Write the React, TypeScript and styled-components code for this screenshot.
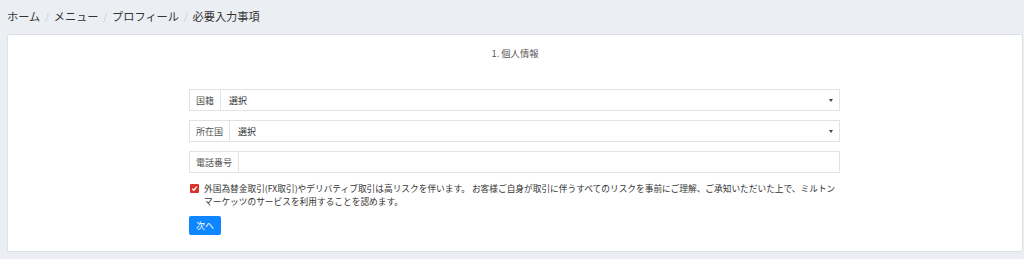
import React from 'react';
import styled, { createGlobalStyle } from 'styled-components';

const GlobalStyle = createGlobalStyle`
  html, body {
    margin: 0;
    padding: 0;
    background: #ebeef3;
    font-family: "Noto Sans CJK JP", "Liberation Sans", sans-serif;
    color: #333;
  }
`;

const Page = styled.div`
  padding: 0 1px 0 7px;
  width: 1024px;
  box-sizing: border-box;
`;

const Breadcrumb = styled.nav`
  display: flex;
  align-items: center;
  height: 34px;
  padding-bottom: 2px;
  box-sizing: border-box;
  font-size: 11.2px;
  color: #333;
`;

const Crumb = styled.span`
  color: #333;
`;

const Sep = styled.span`
  color: #c8c8c8;
  padding: 0 5px;
  font-size: 9px;
`;

const Card = styled.section`
  background: #fff;
  border: 1px solid #dde1e7;
  border-radius: 2px;
  height: 218px;
  box-sizing: border-box;
`;

const StepTitle = styled.div`
  text-align: center;
  font-size: 9.3px;
  color: #555;
  padding-top: 11px;
  height: 54px;
  box-sizing: border-box;
`;

const Form = styled.div`
  width: 651px;
  margin-left: 181px;
  display: flex;
  flex-direction: column;
  gap: 9px;
`;

const InputGroup = styled.div`
  display: flex;
  height: 22px;
  border: 1px solid #e3e3e3;
  box-sizing: border-box;
  font-size: 9px;
`;

const Addon = styled.div`
  display: flex;
  align-items: center;
  padding: 0 6px;
  color: #555;
  border-right: 1px solid #e3e3e3;
  background: #fff;
`;

const Select = styled.div`
  flex: 1;
  display: flex;
  align-items: center;
  justify-content: space-between;
  padding: 0 6px 0 8px;
  color: #333;
`;

const Caret = styled.span`
  width: 0;
  height: 0;
  border-left: 2.5px solid transparent;
  border-right: 2.5px solid transparent;
  border-top: 3px solid #444;
`;

const Field = styled.div`
  flex: 1;
`;

const Consent = styled.label`
  display: flex;
  gap: 5px;
  font-size: 8.7px;
  line-height: 13px;
  color: #333;
`;

const Check = styled.span`
  flex: none;
  width: 9px;
  height: 9px;
  margin-top: 2px;
  margin-left: 1px;
  background: #d9332b;
  border-radius: 1px;
  display: flex;
  align-items: center;
  justify-content: center;
`;

const Button = styled.button`
  align-self: flex-start;
  margin-top: -1px;
  height: 19px;
  padding: 0 7px;
  font-size: 9px;
  font-family: inherit;
  color: #fff;
  background: #0d86ff;
  border: none;
  border-radius: 2px;
`;

export default function App() {
  return (
    <>
      <GlobalStyle />
      <Page>
        <Breadcrumb>
          <Crumb>ホーム</Crumb>
          <Sep>/</Sep>
          <Crumb>メニュー</Crumb>
          <Sep>/</Sep>
          <Crumb>プロフィール</Crumb>
          <Sep>/</Sep>
          <Crumb>必要入力事項</Crumb>
        </Breadcrumb>
        <Card>
          <StepTitle>1. 個人情報</StepTitle>
          <Form>
            <InputGroup>
              <Addon>国籍</Addon>
              <Select>
                選択
                <Caret />
              </Select>
            </InputGroup>
            <InputGroup>
              <Addon>所在国</Addon>
              <Select>
                選択
                <Caret />
              </Select>
            </InputGroup>
            <InputGroup>
              <Addon>電話番号</Addon>
              <Field />
            </InputGroup>
            <Consent>
              <Check>
                <svg width="7" height="7" viewBox="0 0 8 8">
                  <path d="M1.5 4.2 L3.3 6 L6.6 1.8" stroke="#fff" strokeWidth="1.6" fill="none" />
                </svg>
              </Check>
              <span>
                外国為替金取引(FX取引)やデリバティブ取引は高リスクを伴います。 お客様ご自身が取引に伴うすべてのリスクを事前にご理解、ご承知いただいた上で、ミルトンマーケッツのサービスを利用することを認めます。
              </span>
            </Consent>
            <Button>次へ</Button>
          </Form>
        </Card>
      </Page>
    </>
  );
}
